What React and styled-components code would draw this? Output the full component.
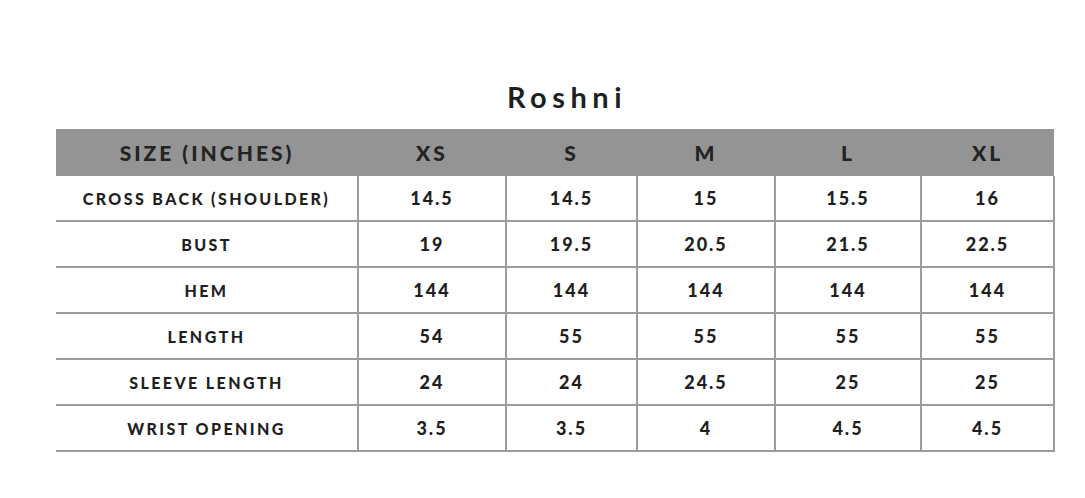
import styled, { createGlobalStyle } from "styled-components"

const GlobalStyle = createGlobalStyle`
    body{
        margin: 0;
        background: #ffffff;
        font-family: Lato, "Noto Sans", sans-serif;
        color: #1f1f1f;
    }
`

const StyledChart = styled.div`
    padding: 78px 31px 0 56px;
    .title{
        text-align: center;
        font-size: 29px;
        font-weight: 700;
        letter-spacing: 5.5px;
        margin: 0 0 14px 0;
        padding-left: 24px;
        line-height: 37px;
    }
`

const Table = styled.table`
    width: 998px;
    border-collapse: collapse;
    table-layout: fixed;
    th{
        background-color: #949494;
        height: 47px;
        font-size: 21px;
        font-weight: 900;
        letter-spacing: 3px;
        color: #232323;
        padding: 0;
        text-align: center;
    }
    td{
        height: 44px;
        padding: 0;
        text-align: center;
        border-bottom: 2px solid #9c9c9c;
        border-left: 2px solid #9c9c9c;
        font-size: 18px;
        font-weight: 900;
        letter-spacing: 2px;
        color: #1f1f1f;
    }
    td:last-child{
        border-right: 2px solid #9c9c9c;
    }
    td.label{
        border-left: none;
        font-size: 16px;
        letter-spacing: 2.4px;
    }
`

const sizes = ["XS", "S", "M", "L", "XL"]
const widths = [302, 148, 131, 138, 146, 133]

const rows = [
    ["CROSS BACK (SHOULDER)", "14.5", "14.5", "15", "15.5", "16"],
    ["BUST", "19", "19.5", "20.5", "21.5", "22.5"],
    ["HEM", "144", "144", "144", "144", "144"],
    ["LENGTH", "54", "55", "55", "55", "55"],
    ["SLEEVE LENGTH", "24", "24", "24.5", "25", "25"],
    ["WRIST OPENING", "3.5", "3.5", "4", "4.5", "4.5"],
]

function App() {
    return (
        <>
            <GlobalStyle />
            <StyledChart>
                <h1 className="title">Roshni</h1>
                <Table>
                    <colgroup>
                        {widths.map((w, i) => <col key={i} style={{ width: w }} />)}
                    </colgroup>
                    <thead>
                        <tr>
                            <th>SIZE (INCHES)</th>
                            {sizes.map(s => <th key={s}>{s}</th>)}
                        </tr>
                    </thead>
                    <tbody>
                        {rows.map(r => (
                            <tr key={r[0]}>
                                <td className="label">{r[0]}</td>
                                {r.slice(1).map((v, i) => <td key={i}>{v}</td>)}
                            </tr>
                        ))}
                    </tbody>
                </Table>
            </StyledChart>
        </>
    )
}

export default App
